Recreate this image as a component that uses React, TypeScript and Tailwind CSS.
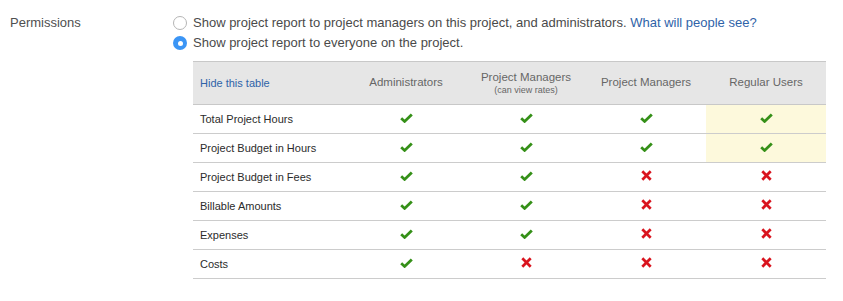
import React from "react";

const Check = () => (
  <svg width="13" height="10" viewBox="0 0 13 10" className="inline-block">
    <path d="M1.2 5.2 L4.6 8.4 L11.8 1.4" fill="none" stroke="#359018" strokeWidth="2.8" strokeLinejoin="miter" />
  </svg>
);

const Cross = () => (
  <svg width="11" height="11" viewBox="0 0 11 11" className="inline-block">
    <path d="M1.3 1.3 L9.7 9.7 M9.7 1.3 L1.3 9.7" fill="none" stroke="#d9141e" strokeWidth="2.7" />
  </svg>
);

type Row = { label: string; v: boolean[] };

const rows: Row[] = [
  { label: "Total Project Hours", v: [true, true, true, true] },
  { label: "Project Budget in Hours", v: [true, true, true, true] },
  { label: "Project Budget in Fees", v: [true, true, false, false] },
  { label: "Billable Amounts", v: [true, true, false, false] },
  { label: "Expenses", v: [true, true, false, false] },
  { label: "Costs", v: [true, false, false, false] },
];

export default function App() {
  return (
    <div
      className="w-[843px] h-[301px] bg-white flex"
      style={{ fontFamily: '"Liberation Sans", Arial, Helvetica, sans-serif' }}
    >
      <div className="w-[173px] pl-[10px] pt-[13px] text-[13px] leading-[20px] text-[#4f4f4f]">Permissions</div>
      <div className="pt-[13px]">
        <div className="flex items-center h-[20px] text-[13px] text-[#4a4a4a]">
          <span className="w-[14px] h-[14px] rounded-full border border-[#b5b5b5] bg-white mr-[6px] shrink-0" />
          <span>
            Show project report to project managers on this project, and administrators.{" "}
            <span className="text-[#2f63a8]">What will people see?</span>
          </span>
        </div>
        <div className="flex items-center h-[20px] text-[13px] text-[#4a4a4a]">
          <span className="w-[14px] h-[14px] rounded-full bg-[#3b95f5] mr-[6px] shrink-0 flex items-center justify-center">
            <span className="w-[5px] h-[5px] rounded-full bg-white" />
          </span>
          <span>Show project report to everyone on the project.</span>
        </div>
        <table className="ml-[20px] mt-[8px] w-[633px] border-collapse text-[11px] table-fixed">
          <colgroup>
            <col className="w-[153px]" />
            <col className="w-[120px]" />
            <col className="w-[120px]" />
            <col className="w-[120px]" />
            <col className="w-[120px]" />
          </colgroup>
          <thead>
            <tr className="bg-[#e6e6e6] border-t border-b border-[#c8c8c8] h-[43px] text-[11.5px]">
              <th className="text-left font-normal pl-[7px] text-[#2f63a8] text-[11px]">Hide this table</th>
              <th className="font-normal text-[#666]">Administrators</th>
              <th className="font-normal text-[#666] leading-[14px]">
                <div>Project Managers</div>
                <div className="text-[9px] leading-[12px]">(can view rates)</div>
              </th>
              <th className="font-normal text-[#666]">Project Managers</th>
              <th className="font-normal text-[#666]">Regular Users</th>
            </tr>
          </thead>
          <tbody>
            {rows.map((r, i) => (
              <tr key={r.label} className="border-b border-[#cccccc] h-[29px]">
                <td className="pl-[7px] text-[#2b2b2b]">{r.label}</td>
                {r.v.map((ok, j) => (
                  <td
                    key={j}
                    className={
                      "text-center align-middle " + (j === 3 && i < 2 ? "bg-[#fdf9dc]" : "")
                    }
                  >
                    <span className="inline-flex items-center justify-center pt-[2px]">
                      {ok ? <Check /> : <Cross />}
                    </span>
                  </td>
                ))}
              </tr>
            ))}
          </tbody>
        </table>
      </div>
    </div>
  );
}
